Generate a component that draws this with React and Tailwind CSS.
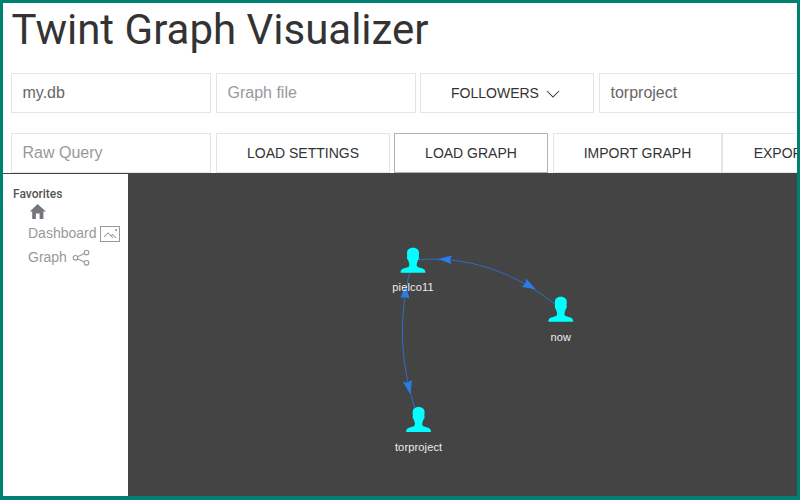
import React from 'react';

const field =
  "h-10 w-[200px] shrink-0 border border-[#e5e5e5] bg-white pl-[10.5px] pr-[9px] font-['Liberation_Sans',sans-serif] text-base text-[#666] placeholder:text-[#999] outline-none";
const button =
  "flex h-10 shrink-0 items-center justify-center border bg-white font-['Liberation_Sans',sans-serif] text-sm text-[#333] whitespace-nowrap";

function ImageIcon() {
  return (
    <svg width="20" height="20" viewBox="0 0 20 20" fill="none" stroke="#999" className="mt-[2px]">
      <circle cx="16.1" cy="6.1" r="1.1" fill="#999" stroke="none" />
      <rect x="0.5" y="2.5" width="19" height="15" />
      <polyline points="4,13 8,9 13,14" strokeWidth="1.01" />
      <polyline points="11,12 12.5,10.5 16,14" strokeWidth="1.01" />
    </svg>
  );
}

function ShareIcon() {
  return (
    <svg width="20" height="20" viewBox="0 0 20 20" fill="none" stroke="#999" strokeWidth="1.1" className="mt-px">
      <line x1="13.4" y1="14" x2="6.3" y2="10.7" />
      <line x1="13.5" y1="5.5" x2="6.5" y2="8.8" />
      <circle cx="15.5" cy="4.6" r="2.3" />
      <circle cx="15.5" cy="14.8" r="2.3" />
      <circle cx="4.5" cy="9.8" r="2.3" />
    </svg>
  );
}

function Person({ x, y, labelY, name }) {
  return (
    <g>
      <path
        transform={`translate(${x} ${y})`}
        fill="#00ffff"
        d="M0 0C4 0 6 2.2 6 5.6C6 7 5.9 7.8 5.7 8.5C6.4 9.6 5.8 12 4.8 12.5C4.5 14.5 3.7 15.3 3.7 16.5C3.7 18.4 4 19 5.2 19.5C8.5 20.4 12.5 20.7 12.5 25H-12.5C-12.5 20.7 -8.5 20.4 -5.2 19.5C-4 19 -3.7 18.4 -3.7 16.5C-3.7 15.3 -4.5 14.5 -4.8 12.5C-5.8 12 -6.4 9.6 -5.7 8.5C-5.9 7.8 -6 7 -6 5.6C-6 2.2 -4 0 0 0Z"
      />
      <text
        x={x}
        y={labelY}
        textAnchor="middle"
        fill="#eeeeee"
        className="font-['Liberation_Sans',sans-serif] text-[11px] tracking-[0.15px]"
      >
        {name}
      </text>
    </g>
  );
}

function Network() {
  return (
    <svg width="669" height="323" viewBox="128 173 669 323" className="block">
      <g fill="none" stroke="#2b6fd6" strokeWidth="0.9">
        <path d="M413 260Q493 252 561 309" />
        <path d="M413 260Q389 340 419 420" />
      </g>
      <g fill="#2b7ce9">
        <path d="M438 259L452 255.5L450 259.7L451.5 264Z" />
        <path d="M536 289.5L526 278.5L525.5 283.5L521.5 286.8Z" />
        <path d="M405.5 285L400.5 298L405 297L409.5 298.5Z" />
        <path d="M410.5 394.5L403 382L407.5 382.4L411.8 380Z" />
      </g>
      <Person x={413} y={247.8} labelY={291} name="pielco11" />
      <Person x={560.8} y={296.8} labelY={341} name="now" />
      <Person x={418.6} y={407} labelY={451} name="torproject" />
    </svg>
  );
}

export default function App() {
  return (
    <div className="flex h-[500px] w-[800px] flex-col overflow-hidden border-[3px] border-b-4 border-[#008073] bg-white font-['Roboto',sans-serif]">
      <header className="flex h-[170px] shrink-0 flex-col overflow-hidden pl-2">
        <h1 className="h-[70px] shrink-0 pt-[2px] pl-[0.5px] text-[42px] leading-[50px] text-[#333]">Twint Graph Visualizer</h1>
        <div className="flex">
          <input className={`${field} mr-[5px]`} defaultValue="my.db" />
          <input className={`${field} mr-1`} placeholder="Graph file" />
          <button className={`${button} mr-[5px] w-[174px] border-[#e5e5e5]`}>
            <span>FOLLOWERS</span>
            <svg width="20" height="20" viewBox="0 0 20 20" fill="none" stroke="#333" strokeWidth="1.03" className="mt-px ml-1">
              <polyline points="16 7 10 13 4 7" />
            </svg>
          </button>
          <input className={field} defaultValue="torproject" />
        </div>
        <div className="mt-5 flex">
          <input className={`${field} mr-[5px]`} placeholder="Raw Query" />
          <button className={`${button} mr-1 w-[174px] border-[#e5e5e5]`}>LOAD SETTINGS</button>
          <button className={`${button} mr-[5px] w-[154px] border-[#b2b2b2]`}>LOAD GRAPH</button>
          <button className={`${button} w-[169px] border-[#e5e5e5]`}>IMPORT GRAPH</button>
          <button className={`${button} w-[174px] border-[#e5e5e5]`}>EXPORT GRAPH</button>
        </div>
      </header>
      <div className="flex min-h-0 flex-1">
        <aside className="w-[125px] shrink-0 border-t border-[#444] pl-[10px] font-['Liberation_Sans',sans-serif] text-sm text-[#999]">
          <h2 className="pt-3 font-['Roboto',sans-serif] text-xs leading-4 font-medium text-[#555]">Favorites</h2>
          <nav className="pl-[15px]">
            <a className="flex h-[19px] items-start">
              <svg width="20" height="18" viewBox="0 0 20 18" fill="#75777a">
                <path d="M9.7 2L17.8 9.6H15.4V17H11.6V11.6H7.9V17H4.2V9.6H1.8Z" />
              </svg>
            </a>
            <a className="flex h-6 items-center gap-[3px]">Dashboard <ImageIcon /></a>
            <a className="flex h-6 items-center gap-1">Graph <ShareIcon /></a>
          </nav>
        </aside>
        <main className="w-[669px] shrink-0 bg-[#444]">
          <Network />
        </main>
      </div>
    </div>
  );
}
